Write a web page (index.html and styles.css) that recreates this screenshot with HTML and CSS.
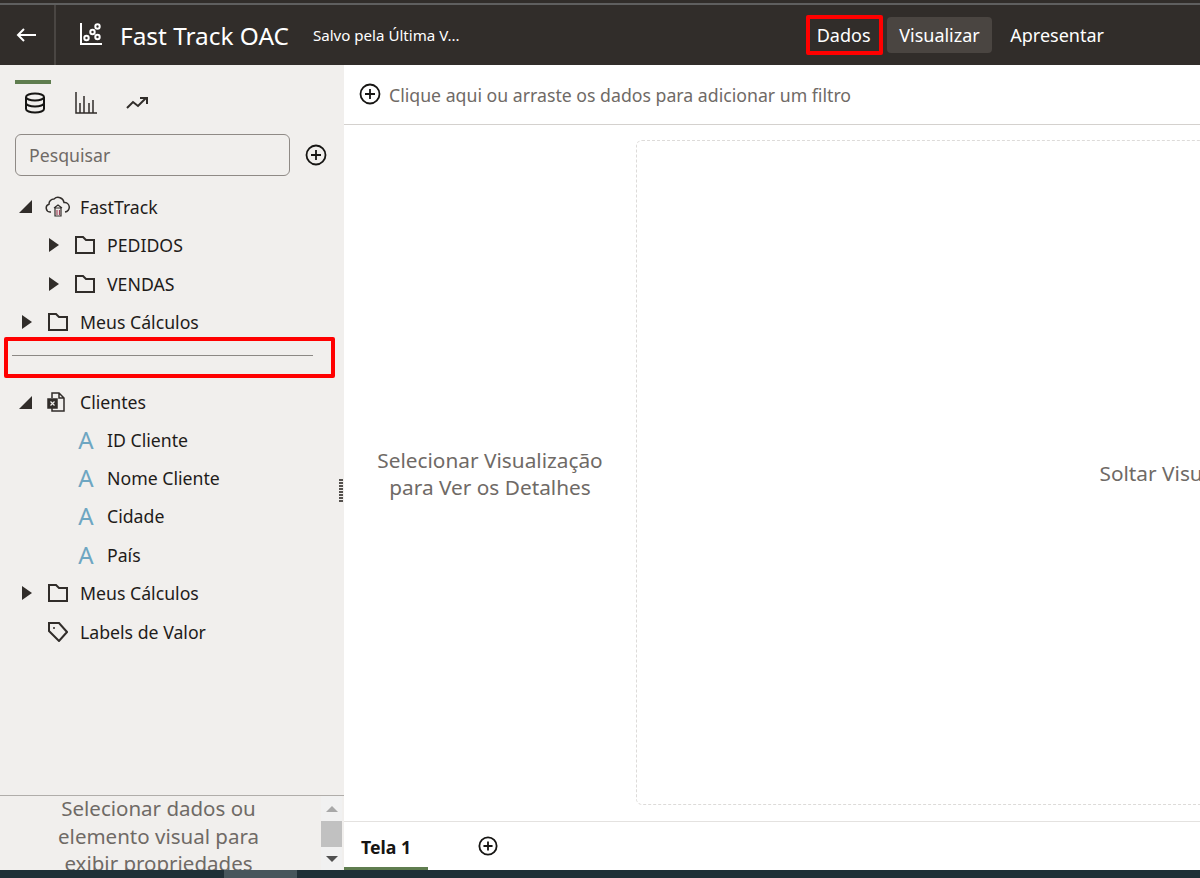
FILE: index.html
```html
<!DOCTYPE html>
<html lang="pt-BR">
<head>
  <meta charset="UTF-8" />
  <title>Fast Track OAC</title>
  <link rel="stylesheet" href="styles.css">
</head>
<body>
  <div class="topstrip"></div>

  <header class="header">
    <div class="back">
      <svg width="20" height="14" viewBox="0 0 20 14"><path d="M20 7H2M8 1L2 7l6 6" fill="none" stroke="#fff" stroke-width="2"/></svg>
    </div>
    <svg class="logo" width="22" height="22" viewBox="0 0 22 22">
      <path d="M1 0v21h21" fill="none" stroke="#fff" stroke-width="2"/>
      <circle cx="6.5" cy="15" r="2.2" fill="none" stroke="#fff" stroke-width="2"/>
      <circle cx="12.5" cy="9" r="2.2" fill="none" stroke="#fff" stroke-width="2"/>
      <circle cx="17.5" cy="3.5" r="2.2" fill="none" stroke="#fff" stroke-width="2"/>
      <circle cx="17.5" cy="14" r="2.2" fill="none" stroke="#fff" stroke-width="2"/>
    </svg>
    <span class="title">Fast Track OAC</span>
    <span class="saved">Salvo pela Última V...</span>
    <nav class="modes">
      <a class="mode mode-marked">Dados</a>
      <a class="mode mode-active">Visualizar</a>
      <a class="mode">Apresentar</a>
    </nav>
  </header>

  <div class="main">
    <aside class="sidebar">
      <div class="side-tabs">
        <span class="side-tab side-tab-active">
          <svg width="22" height="22" viewBox="0 0 22 22" fill="none" stroke="#161513" stroke-width="2"><ellipse cx="11" cy="5" rx="9" ry="3.5"/><path d="M2 5v12c0 2 4 3.5 9 3.5s9-1.5 9-3.5V5M2 11c0 2 4 3.5 9 3.5s9-1.5 9-3.5"/></svg>
        </span>
        <span class="side-tab">
          <svg width="22" height="22" viewBox="0 0 22 22" fill="none" stroke="#312d2a" stroke-width="1.5"><path d="M1 0v21h21M5 21V11M9 21V4M14 21V11M18 21V8"/></svg>
        </span>
        <span class="side-tab">
          <svg width="22" height="14" viewBox="0 0 22 14" fill="none" stroke="#312d2a" stroke-width="2"><path d="M1 12l6-6 5 4 8-8M14 2h7v6"/></svg>
        </span>
      </div>

      <div class="search-row">
        <div class="search">Pesquisar</div>
        <svg class="plus" width="22" height="22" viewBox="0 0 22 22" fill="none" stroke="#161513" stroke-width="1.8"><circle cx="11" cy="11" r="9.5"/><path d="M11 6v10M6 11h10"/></svg>
      </div>

      <ul class="tree">
        <li class="row">
          <span class="caret-open"></span>
          <svg class="icon-cloud" width="26" height="22" viewBox="0 0 26 22" fill="none" stroke="#312d2a" stroke-width="1.5"><path d="M6 16H5a4 4 0 0 1-1-7.8A5 5 0 0 1 9 3a6 6 0 0 1 10 3.500 4.500 4.500 0 0 1 1 9.500"/><path d="M9 12l4-3 4 3M10 12h6v8h-6z" stroke-width="1.2"/><path d="M12 14v5M14.5 14v5" stroke="#a0455a" stroke-width="1.2"/></svg>
          FastTrack
        </li>
        <li class="row row-sub"><span class="caret"></span><svg class="folder" width="20" height="18" viewBox="0 0 20 18"><path d="M1 1h7l3 3h8v13H1z"/></svg>PEDIDOS</li>
        <li class="row row-sub"><span class="caret"></span><svg class="folder" width="20" height="18" viewBox="0 0 20 18"><path d="M1 1h7l3 3h8v13H1z"/></svg>VENDAS</li>
        <li class="row"><span class="caret"></span><svg class="folder" width="20" height="18" viewBox="0 0 20 18"><path d="M1 1h7l3 3h8v13H1z"/></svg>Meus Cálculos</li>
        <li class="separator"><div class="separator-line"></div></li>
        <li class="row row-file">
          <span class="caret-open"></span>
          <svg class="icon-file" width="20" height="20" viewBox="0 0 20 20" fill="none" stroke="#312d2a" stroke-width="1.5"><path d="M5 6V1h7l5 5v13H5v-3M12 1v5h5"/><rect x="1" y="7" width="9" height="9" fill="#312d2a"/><path d="M3.5 9.5l4 4M7.5 9.5l-4 4" stroke="#f1efed" stroke-width="1.2"/></svg>
          Clientes
        </li>
        <li class="row row-attr"><span class="letter">A</span>ID Cliente</li>
        <li class="row row-attr"><span class="letter">A</span>Nome Cliente</li>
        <li class="row row-attr"><span class="letter">A</span>Cidade</li>
        <li class="row row-attr"><span class="letter">A</span>País</li>
        <li class="row"><span class="caret"></span><svg class="folder" width="20" height="18" viewBox="0 0 20 18"><path d="M1 1h7l3 3h8v13H1z"/></svg>Meus Cálculos</li>
        <li class="row row-leaf">
          <svg class="folder" width="20" height="20" viewBox="0 0 20 20"><path d="M1 1h10l8 9-8 9-10-10z"/><circle cx="6" cy="6" r="1" fill="#312d2a" stroke="none"/></svg>
          Labels de Valor
        </li>
      </ul>

      <div class="grip"></div>

      <div class="props">
        <div class="props-text">Selecionar dados ou elemento visual para exibir propriedades</div>
        <div class="scrollbar">
          <span class="arrow-up"></span>
          <span class="thumb"></span>
          <span class="arrow-down"></span>
        </div>
      </div>
    </aside>

    <section class="content">
      <div class="filter-bar">
        <svg width="22" height="22" viewBox="0 0 22 22" fill="none" stroke="#161513" stroke-width="1.8"><circle cx="11" cy="11" r="9.5"/><path d="M11 6v10M6 11h10"/></svg>
        <span class="filter-text">Clique aqui ou arraste os dados para adicionar um filtro</span>
      </div>

      <div class="canvas">
        <div class="details">Selecionar Visualização<br>para Ver os Detalhes</div>
        <div class="drop">Soltar Visualizações Aqui</div>
      </div>

      <div class="tabs">
        <div class="tab">Tela 1</div>
        <svg class="tab-add" width="20" height="20" viewBox="0 0 22 22" fill="none" stroke="#161513" stroke-width="2"><circle cx="11" cy="11" r="9.5"/><path d="M11 6v10M6 11h10"/></svg>
      </div>
    </section>
  </div>

  <div class="bottombar"><span class="bottombar-thumb"></span></div>
</body>
</html>
```

FILE: styles.css
```css
* {
  box-sizing: border-box;
  margin: 0;
  padding: 0;
}

html, body {
  height: 100%;
  overflow: hidden;
}

body {
  display: flex;
  flex-direction: column;
  background-color: #fff;
  color: #161513;
  font-family: "Noto Sans", "Open Sans", sans-serif;
}

.topstrip {
  height: 5px;
  background-color: #312d2a;
  border-bottom: 2px solid #5f5f5f;
}

/* barra do topo */
.header {
  height: 60px;
  display: flex;
  align-items: center;
  background-color: #312d2a;
  color: #fff;
}

.back {
  width: 56px;
  height: 60px;
  padding-left: 16px;
  display: flex;
  align-items: center;
  border-right: 2px solid #4a4643;
}

.logo {
  margin-left: 24px;
  margin-bottom: 2px;
}

.title {
  margin-left: 18px;
  font-size: 24.4px;
}

.saved {
  margin-left: 24px;
  font-size: 15.1px;
}

.modes {
  margin-left: auto;
  margin-right: 84px;
  display: flex;
  align-items: center;
}

.mode {
  font-size: 18px;
  padding: 0 12px;
  height: 36px;
  line-height: 36px;
}

.mode-marked {
  width: 77px;
  height: 40px;
  padding: 0 7px;
  line-height: 32px;
  border: 4px solid #f00;
  border-radius: 2px;
  margin-right: 4px;
}

.mode-active {
  padding: 0 12.5px;
  background-color: #4a4541;
  border-radius: 4px;
  margin-right: 6px;
}

.main {
  flex: 1;
  min-height: 0;
  display: flex;
}

/* painel de dados */
.sidebar {
  position: relative;
  width: 344px;
  flex-shrink: 0;
  display: flex;
  flex-direction: column;
  background-color: #f1efed;
}

.side-tabs {
  display: flex;
  margin: 15px 0 0 15px;
}

.side-tab {
  width: 36px;
  height: 36px;
  margin-right: 15px;
  display: flex;
  align-items: center;
  justify-content: center;
  padding: 5px 0 0 3px;
  border-top: 4px solid transparent;
}

.side-tab-active {
  border-top-color: #5f7d4f;
}

.search-row {
  display: flex;
  align-items: center;
  margin: 18px 0 0 15px;
}

.search {
  width: 275px;
  height: 42px;
  padding-left: 13px;
  line-height: 40px;
  font-size: 17.7px;
  color: #6f6a66;
  border: 1px solid #8f8a86;
  border-radius: 6px;
}

.plus {
  margin-left: 15px;
}

.tree {
  list-style: none;
  margin-top: 11.6px;
}

.row {
  height: 38.4px;
  padding-left: 19px;
  display: flex;
  align-items: center;
  font-size: 17.7px;
  color: #1f1c1a;
}

.row-file {
  height: 36.6px;
}

.row-sub {
  padding-left: 46px;
}

.row-attr {
  padding-left: 77px;
}

.row-leaf {
  padding-left: 48px;
}

.caret {
  flex-shrink: 0;
  margin: 0 16px 0 3px;
  border-left: 10px solid #312d2a;
  border-top: 7.5px solid transparent;
  border-bottom: 7.5px solid transparent;
}

.caret-open {
  flex-shrink: 0;
  margin-right: 16px;
  border-left: 13px solid transparent;
  border-bottom: 13px solid #312d2a;
}

.folder {
  flex-shrink: 0;
  margin-right: 12px;
  fill: none;
  stroke: #312d2a;
  stroke-width: 2;
}

.icon-cloud {
  flex-shrink: 0;
  margin: 0 9px 0 -3px;
}

.icon-file {
  flex-shrink: 0;
  margin: 0 13px 0 -1px;
}

.letter {
  width: 18px;
  margin-right: 12px;
  font-size: 24px;
  line-height: 1;
  text-align: center;
  color: #6ea6c2;
}

/* marcacao vermelha do separador */
.separator {
  width: 331px;
  height: 41px;
  margin: -4.2px 0 5.9px 4px;
  padding: 14px 0 0 4px;
  border: 4px solid #f00;
  border-radius: 2px;
}

.separator-line {
  width: 301px;
  height: 1px;
  background-color: #8c8985;
}

.grip {
  position: absolute;
  top: 414px;
  right: 1px;
  width: 4px;
  height: 24px;
  background: repeating-linear-gradient(#55514e 0 2px, transparent 2px 3px);
}

.props {
  margin-top: auto;
  height: 75px;
  display: flex;
  overflow: hidden;
  border-top: 1px solid #b0adaa;
}

.props-text {
  width: 321px;
  margin-top: -1px;
  padding: 0 52px 0 48px;
  font-size: 20.5px;
  line-height: 27.5px;
  text-align: center;
  color: #6f6a66;
}

.scrollbar {
  width: 21px;
  display: flex;
  flex-direction: column;
  align-items: center;
  background-color: #f1f1f1;
}

.arrow-up {
  margin-top: 10px;
  border-left: 6px solid transparent;
  border-right: 6px solid transparent;
  border-bottom: 6px solid #a8a8a8;
}

.thumb {
  width: 21px;
  height: 26px;
  margin-top: 9px;
  background-color: #c1c1c1;
}

.arrow-down {
  margin-top: 9px;
  border-left: 6px solid transparent;
  border-right: 6px solid transparent;
  border-top: 6px solid #505050;
}

/* area de trabalho */
.content {
  flex: 1;
  min-width: 0;
  display: flex;
  flex-direction: column;
}

.filter-bar {
  height: 60px;
  padding: 0 0 1px 15px;
  display: flex;
  align-items: center;
  gap: 8px;
  font-size: 17.7px;
  color: #6f6a66;
  border-bottom: 1px solid #d4d1ce;
}

.filter-text {
  padding-top: 2px;
}

.canvas {
  flex: 1;
  min-height: 0;
  padding: 15px 0 16px;
  display: flex;
}

.details {
  width: 292px;
  flex-shrink: 0;
  align-self: center;
  margin-top: 2px;
  text-align: center;
  font-size: 20.8px;
  line-height: 27px;
  color: #6f6a66;
}

.drop {
  width: 1168px;
  flex-shrink: 0;
  display: flex;
  align-items: center;
  justify-content: center;
  font-size: 20.8px;
  color: #6f6a66;
  border: 1px dashed #dddbd9;
  border-radius: 6px;
}

.tabs {
  height: 49px;
  display: flex;
  align-items: flex-start;
  border-top: 1px solid #e4e2e0;
}

.tab {
  width: 84px;
  height: 48px;
  padding: 13px 0 0 17px;
  font-size: 17.7px;
  font-weight: 700;
  color: #161513;
  border-bottom: 3px solid #5f7d4f;
}

.tab-add {
  margin: 14px 0 0 50px;
}

.bottombar {
  height: 8px;
  flex-shrink: 0;
  background-color: #1f2f36;
}

.bottombar-thumb {
  display: block;
  width: 73px;
  height: 8px;
  margin-left: 224px;
  background-color: #47565c;
}
```
